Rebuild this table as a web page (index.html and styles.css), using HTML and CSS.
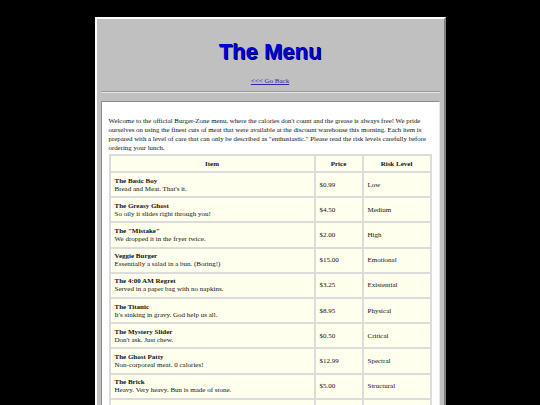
FILE: index.html
```html
<!DOCTYPE html>
<html>
<head>
<meta charset="utf-8">
<title>The Menu</title>
<link rel="stylesheet" href="styles.css">
</head>
<body>
<div class="page">
  <div class="header">
    <h1 class="title">The Menu</h1>
    <a class="back" href="#">&lt;&lt;&lt; Go Back</a>
  </div>
  <hr class="rule">
  <div class="content">
    <p class="intro">Welcome to the official Burger-Zone menu, where the calories don't count and the grease is always free! We pride ourselves on using the finest cuts of meat that were available at the discount warehouse this morning. Each item is prepared with a level of care that can only be described as "enthusiastic." Please read the risk levels carefully before ordering your lunch.</p>
    <table class="menu">
      <thead>
        <tr><th class="c-item">Item</th><th class="c-price">Price</th><th class="c-risk">Risk Level</th></tr>
      </thead>
      <tbody>
        <tr><td><b>The Basic Boy</b><br>Bread and Meat. That's it.</td><td>$0.99</td><td>Low</td></tr>
        <tr><td><b>The Greasy Ghost</b><br>So oily it slides right through you!</td><td>$4.50</td><td>Medium</td></tr>
        <tr><td><b>The "Mistake"</b><br>We dropped it in the fryer twice.</td><td>$2.00</td><td>High</td></tr>
        <tr><td><b>Veggie Burger</b><br>Essentially a salad in a bun. (Boring!)</td><td>$15.00</td><td>Emotional</td></tr>
        <tr><td><b>The 4:00 AM Regret</b><br>Served in a paper bag with no napkins.</td><td>$3.25</td><td>Existential</td></tr>
        <tr><td><b>The Titanic</b><br>It's sinking in gravy. God help us all.</td><td>$8.95</td><td>Physical</td></tr>
        <tr><td><b>The Mystery Slider</b><br>Don't ask. Just chew.</td><td>$0.50</td><td>Critical</td></tr>
        <tr><td><b>The Ghost Patty</b><br>Non-corporeal meat. 0 calories!</td><td>$12.99</td><td>Spectral</td></tr>
        <tr><td><b>The Brick</b><br>Heavy. Very heavy. Bun is made of stone.</td><td>$5.00</td><td>Structural</td></tr>
        <tr><td><b>The Final Boss</b><br>Nobody has ever finished it.</td><td>$20.00</td><td>Fatal</td></tr>
      </tbody>
    </table>
  </div>
</div>
</body>
</html>
```
FILE: styles.css
```css
html, body {
  background: #000;
}
body {
  margin: 0;
  padding-top: 17px;
  font-family: "Liberation Serif", "Times New Roman", serif;
}
.page {
  width: 339px;
  margin: 0 auto;
  background: #c0c0c0;
  border: 2px solid;
  border-color: #ffffff #808080 #808080 #ffffff;
  padding: 0 4px 20px;
}
.header {
  text-align: center;
  padding-top: 20px;
  font-size: 7px;
  line-height: 8px;
}
.title {
  margin: 0;
  font-family: "Liberation Sans", Arial, sans-serif;
  font-weight: bold;
  font-size: 22px;
  line-height: 26px;
  color: #0000dd;
  text-shadow: 1px 1px 0 #00004a;
}
.back {
  display: inline-block;
  margin-top: 12px;
  font-size: 7px;
  line-height: 8px;
  color: #2828b0;
}
.rule {
  margin: 6px 0 8px;
  border: 0;
  border-top: 1px solid #9a9a9a;
  border-bottom: 1px solid #e6e6e6;
  height: 0;
}
.content {
  background: #fff;
  border: 1px solid;
  border-color: #8a8a8a #e8e8e8 #e8e8e8 #8a8a8a;
  padding: 14px 7px 10px;
}
.intro {
  margin: 0 0 2px;
  font-size: 6.85px;
  line-height: 9px;
  color: #111;
}
.menu {
  width: 100%;
  border-collapse: collapse;
  font-size: 7px;
  line-height: 8px;
  color: #111;
}
.menu th, .menu td {
  background: #ffffee;
  border: 2px solid #dcdcdc;
  text-align: left;
  vertical-align: middle;
}
.menu th {
  text-align: center;
  height: 13px;
  padding: 1px 4px;
}
.menu td {
  padding: 3.6px 4px;
  height: 16px;
}
.c-price { width: 38px; }
.c-risk { width: 58px; }
```
